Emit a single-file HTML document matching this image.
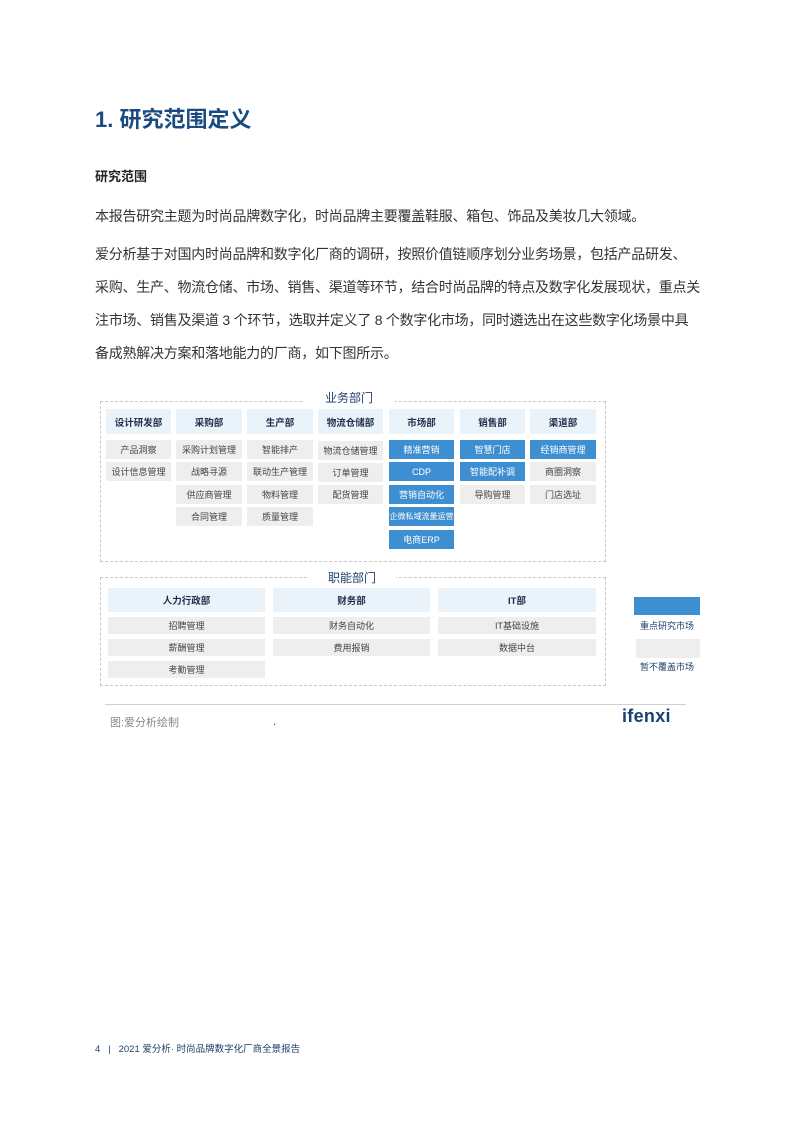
<!DOCTYPE html>
<html><head><meta charset="utf-8"><style>
body{margin:0;background:#fff;}
#p{position:relative;width:793px;height:1122px;overflow:hidden;font-family:"Liberation Sans","Noto Sans CJK SC",sans-serif;color:#333;}
.a{position:absolute;white-space:nowrap;}
.ln{position:absolute;left:95px;font-size:14px;color:#333;white-space:nowrap;letter-spacing:-0.25px;}
.b{position:absolute;font-size:9px;text-align:center;color:#444;display:flex;align-items:center;justify-content:center;}
.h{background:#eaf2fa;font-weight:bold;color:#1f2f4a;font-size:9.5px;}
.g{background:#eeeeee;}
.u{background:#3d8fd1;color:#fff;}
.dash{position:absolute;border:1px dashed #c8c8c8;}
</style></head><body><div id="p">
<div class="a" style="left:95px;top:102px;font-size:22px;font-weight:bold;color:#1b4a80;">1. 研究范围定义</div>
<div class="a" style="left:95px;top:166px;font-size:13px;font-weight:bold;color:#222;">研究范围</div>
<div class="ln" style="top:206px;">本报告研究主题为时尚品牌数字化，时尚品牌主要覆盖鞋服、箱包、饰品及美妆几大领域。</div>
<div class="ln" style="top:244px;">爱分析基于对国内时尚品牌和数字化厂商的调研，按照价值链顺序划分业务场景，包括产品研发、</div>
<div class="ln" style="top:277px;">采购、生产、物流仓储、市场、销售、渠道等环节，结合时尚品牌的特点及数字化发展现状，重点关</div>
<div class="ln" style="top:310px;">注市场、销售及渠道 3 个环节，选取并定义了 8 个数字化市场，同时遴选出在这些数字化场景中具</div>
<div class="ln" style="top:343px;">备成熟解决方案和落地能力的厂商，如下图所示。</div>

<div class="dash" style="left:100px;top:401px;width:504px;height:159px;"></div>
<div class="a" style="left:303px;top:389px;width:92px;height:16px;background:#fff;text-align:center;font-size:12px;color:#1f3f6a;">业务部门</div>

<div class="b h" style="left:106px;top:409px;width:65px;height:25px;">设计研发部</div>
<div class="b h" style="left:176px;top:409px;width:66px;height:25px;">采购部</div>
<div class="b h" style="left:247px;top:409px;width:66px;height:25px;">生产部</div>
<div class="b h" style="left:318px;top:409px;width:65px;height:25px;">物流仓储部</div>
<div class="b h" style="left:389px;top:409px;width:65px;height:25px;">市场部</div>
<div class="b h" style="left:460px;top:409px;width:65px;height:25px;">销售部</div>
<div class="b h" style="left:530px;top:409px;width:66px;height:25px;">渠道部</div>

<div class="b g" style="left:106px;top:440px;width:65px;height:19px;">产品洞察</div>
<div class="b g" style="left:106px;top:462px;width:65px;height:19px;">设计信息管理</div>

<div class="b g" style="left:176px;top:440px;width:66px;height:19px;">采购计划管理</div>
<div class="b g" style="left:176px;top:462px;width:66px;height:19px;">战略寻源</div>
<div class="b g" style="left:176px;top:485px;width:66px;height:19px;">供应商管理</div>
<div class="b g" style="left:176px;top:507px;width:66px;height:19px;">合同管理</div>

<div class="b g" style="left:247px;top:440px;width:66px;height:19px;">智能排产</div>
<div class="b g" style="left:247px;top:462px;width:66px;height:19px;">联动生产管理</div>
<div class="b g" style="left:247px;top:485px;width:66px;height:19px;">物料管理</div>
<div class="b g" style="left:247px;top:507px;width:66px;height:19px;">质量管理</div>

<div class="b g" style="left:318px;top:441px;width:65px;height:19px;">物流仓储管理</div>
<div class="b g" style="left:318px;top:463px;width:65px;height:19px;">订单管理</div>
<div class="b g" style="left:318px;top:485px;width:65px;height:19px;">配货管理</div>

<div class="b u" style="left:389px;top:440px;width:65px;height:19px;">精准营销</div>
<div class="b u" style="left:389px;top:462px;width:65px;height:19px;">CDP</div>
<div class="b u" style="left:389px;top:485px;width:65px;height:19px;">营销自动化</div>
<div class="b u" style="left:389px;top:507px;width:65px;height:19px;font-size:8px;">企微私域流量运营</div>
<div class="b u" style="left:389px;top:530px;width:65px;height:19px;">电商ERP</div>

<div class="b u" style="left:460px;top:440px;width:65px;height:19px;">智慧门店</div>
<div class="b u" style="left:460px;top:462px;width:65px;height:19px;">智能配补调</div>
<div class="b g" style="left:460px;top:485px;width:65px;height:19px;">导购管理</div>

<div class="b u" style="left:530px;top:440px;width:66px;height:19px;">经销商管理</div>
<div class="b g" style="left:530px;top:462px;width:66px;height:19px;">商圈洞察</div>
<div class="b g" style="left:530px;top:485px;width:66px;height:19px;">门店选址</div>

<div class="dash" style="left:100px;top:577px;width:504px;height:107px;"></div>
<div class="a" style="left:308px;top:569px;width:88px;height:16px;background:#fff;text-align:center;font-size:12px;color:#1f3f6a;">职能部门</div>

<div class="b h" style="left:108px;top:588px;width:157px;height:24px;">人力行政部</div>
<div class="b h" style="left:273px;top:588px;width:157px;height:24px;">财务部</div>
<div class="b h" style="left:438px;top:588px;width:158px;height:24px;">IT部</div>

<div class="b g" style="left:108px;top:617px;width:157px;height:17px;">招聘管理</div>
<div class="b g" style="left:108px;top:639px;width:157px;height:17px;">薪酬管理</div>
<div class="b g" style="left:108px;top:661px;width:157px;height:17px;">考勤管理</div>
<div class="b g" style="left:273px;top:617px;width:157px;height:17px;">财务自动化</div>
<div class="b g" style="left:273px;top:639px;width:157px;height:17px;">费用报销</div>
<div class="b g" style="left:438px;top:617px;width:158px;height:17px;">IT基础设施</div>
<div class="b g" style="left:438px;top:639px;width:158px;height:17px;">数据中台</div>

<div class="a" style="left:634px;top:597px;width:66px;height:18px;background:#3d8fd1;"></div>
<div class="a" style="left:634px;top:619px;width:66px;text-align:center;font-size:9px;color:#1f3f6a;">重点研究市场</div>
<div class="a" style="left:636px;top:639px;width:64px;height:19px;background:#eeeeee;"></div>
<div class="a" style="left:634px;top:660px;width:66px;text-align:center;font-size:9px;color:#1f3f6a;">暂不覆盖市场</div>

<div class="a" style="left:105px;top:704px;width:581px;height:1px;background:#d0d0d0;"></div>
<div class="a" style="left:110px;top:714px;font-size:11px;color:#888;">图:爱分析绘制</div>
<div class="a" style="left:273px;top:716px;font-size:11px;color:#333;">.</div>
<div class="a" style="left:622px;top:706px;font-size:18px;font-weight:bold;color:#1b3f73;letter-spacing:0.3px;">ifenxi</div>

<div class="a" style="left:95px;top:1041px;font-size:9.5px;color:#1f3f6a;">4&nbsp;&nbsp;&nbsp;|&nbsp;&nbsp;&nbsp;2021 爱分析· 时尚品牌数字化厂商全景报告</div>
</div></body></html>
